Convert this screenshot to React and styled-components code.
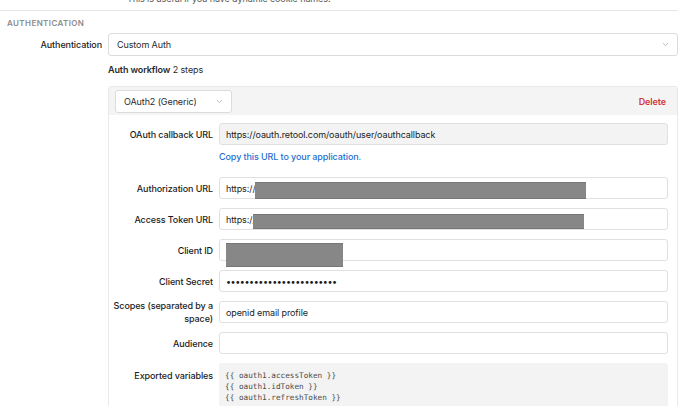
import React from 'react';
import styled, { createGlobalStyle } from 'styled-components';

const GlobalStyle = createGlobalStyle`
    body {
        margin: 0;
        background: #ffffff;
        font-family: Inter, "Noto Sans", sans-serif;
        color: #1c1c1c;
        font-size: 9px;
        letter-spacing: -0.1px;
    }
`;

const Page = styled.div`
    width: 678px;
    height: 406px;
    overflow: hidden;
`;

const Hint = styled.div`
    height: 10px;
    overflow: hidden;
    border-bottom: 1px solid #e6e6e6;
    padding-left: 127px;
    color: #555;
    line-height: 12px;

    span {
        display: block;
        margin-top: -7px;
    }
`;

const SectionTitle = styled.div`
    padding: 5px 7px 0;
    height: 16px;
    line-height: 14px;
    font-size: 8px;
    font-weight: 600;
    letter-spacing: 0.4px;
    color: #8c8c8c;
`;

const TopRow = styled.div`
    display: flex;
    align-items: center;
    gap: 6px;
    margin-top: 1px;
`;

const TopLabel = styled.div`
    width: 102px;
    text-align: right;
    font-weight: 500;
    color: #1c1c1c;
`;

const Select = styled.div`
    flex: ${({ $width }) => ($width ? 'none' : '1')};
    width: ${({ $width }) => ($width ? `${$width}px` : 'auto')};
    height: 23px;
    box-sizing: border-box;
    border: 1px solid #dcdcdc;
    border-radius: 3px;
    background: #fff;
    display: flex;
    align-items: center;
    justify-content: space-between;
    padding: 0 8px 0 8px;
    color: #2a2a2a;
`;

const Chevron = () => (
    <svg width="7" height="5" viewBox="0 0 7 5">
        <path d="M1 1.2 L3.5 3.6 L6 1.2" fill="none" stroke="#b5b5b5" strokeWidth="0.9" />
    </svg>
);

const Indented = styled.div`
    margin-left: 108px;
`;

const Workflow = styled.div`
    height: 16px;
    line-height: 16px;
    margin-top: 6px;
    color: #2a2a2a;

    b {
        font-weight: 600;
    }
`;

const Card = styled.div`
    margin-top: 8px;
    border: 1px solid #e9e9e9;
    border-radius: 3px 3px 0 0;
    border-bottom: none;
`;

const CardHeader = styled.div`
    background: #f4f4f4;
    height: 28px;
    display: flex;
    align-items: center;
    justify-content: space-between;
    padding: 0 11px 0 6px;
`;

const Delete = styled.span`
    color: #d2383a;
    font-weight: 600;
`;

const CardBody = styled.div`
    padding: 7px 9px 0 0;
    display: flex;
    flex-direction: column;
`;

const Row = styled.div`
    display: flex;
    align-items: ${({ $top }) => ($top ? 'flex-start' : 'center')};
    height: ${({ $top }) => ($top ? 'auto' : '22px')};
    gap: 6px;
    margin-top: ${({ $gap }) => $gap}px;
`;

const Label = styled.div`
    width: 104px;
    flex: none;
    text-align: right;
    font-weight: 500;
    color: #1c1c1c;
    line-height: 13px;
    padding-top: ${({ $pad }) => $pad || 0}px;
`;

const Field = styled.div`
    position: relative;
    flex: 1;
    height: 22px;
    box-sizing: border-box;
    border: 1px solid #e0e0e0;
    border-radius: 3px;
    background: ${({ $muted }) => ($muted ? '#f3f3f3' : '#fff')};
    display: flex;
    align-items: center;
    padding: 0 6px;
    color: #1c1c1c;
    white-space: nowrap;
`;

const Redact = styled.span`
    position: absolute;
    background: #878787;
    border-top: 1px solid #777;
    border-bottom: 1px solid #777;
    box-sizing: border-box;
`;

const Secret = styled.span`
    letter-spacing: -0.45px;
    font-size: 9px;
`;

const Help = styled.div`
    margin: 5px 0 0 110px;
    color: #1f6fd0;
    font-weight: 500;
    height: 13px;
    line-height: 13px;
`;

const CodeBox = styled.div`
    flex: 1;
    background: #f3f3f3;
    border-radius: 3px 3px 0 0;
    padding: 7px 6px 0;
    height: 50px;
    font-family: "DejaVu Sans Mono", "Liberation Mono", monospace;
    font-size: 7.7px;
    letter-spacing: 0;
    line-height: 11px;
    color: #4a4a4a;
`;

export default function App() {
    return (
        <Page>
            <GlobalStyle />
            <Hint><span>This is useful if you have dynamic cookie names.</span></Hint>
            <SectionTitle>AUTHENTICATION</SectionTitle>
            <TopRow>
                <TopLabel>Authentication</TopLabel>
                <Select>Custom Auth<Chevron /></Select>
            </TopRow>
            <Indented>
                <Workflow><b>Auth workflow</b> 2 steps</Workflow>
                <Card>
                    <CardHeader>
                        <Select $width={117}>OAuth2 (Generic)<Chevron /></Select>
                        <Delete>Delete</Delete>
                    </CardHeader>
                    <CardBody>
                        <Row $gap={1}>
                            <Label>OAuth callback URL</Label>
                            <Field $muted>https://oauth.retool.com/oauth/user/oauthcallback</Field>
                        </Row>
                        <Help>Copy this URL to your application.</Help>
                        <Row $gap={14}>
                            <Label>Authorization URL</Label>
                            <Field>
                                https://
                                <Redact style={{ left: 35, width: 331, top: 4, height: 17 }} />
                            </Field>
                        </Row>
                        <Row $gap={9}>
                            <Label>Access Token URL</Label>
                            <Field>
                                https://
                                <Redact style={{ left: 33, width: 331, top: 5, height: 15 }} />
                            </Field>
                        </Row>
                        <Row $gap={9}>
                            <Label>Client ID</Label>
                            <Field>
                                <Redact style={{ left: 6, width: 117, top: 3, height: 24 }} />
                            </Field>
                        </Row>
                        <Row $gap={9}>
                            <Label>Client Secret</Label>
                            <Field><Secret>••••••••••••••••••••••••</Secret></Field>
                        </Row>
                        <Row $gap={9}>
                            <Label>Scopes (separated by a space)</Label>
                            <Field>openid email profile</Field>
                        </Row>
                        <Row $gap={9}>
                            <Label>Audience</Label>
                            <Field />
                        </Row>
                        <Row $gap={9} $top>
                            <Label $pad={6}>Exported variables</Label>
                            <CodeBox>
                                {'{{ oauth1.accessToken }}'}<br />
                                {'{{ oauth1.idToken }}'}<br />
                                {'{{ oauth1.refreshToken }}'}
                            </CodeBox>
                        </Row>
                    </CardBody>
                </Card>
            </Indented>
        </Page>
    );
}
